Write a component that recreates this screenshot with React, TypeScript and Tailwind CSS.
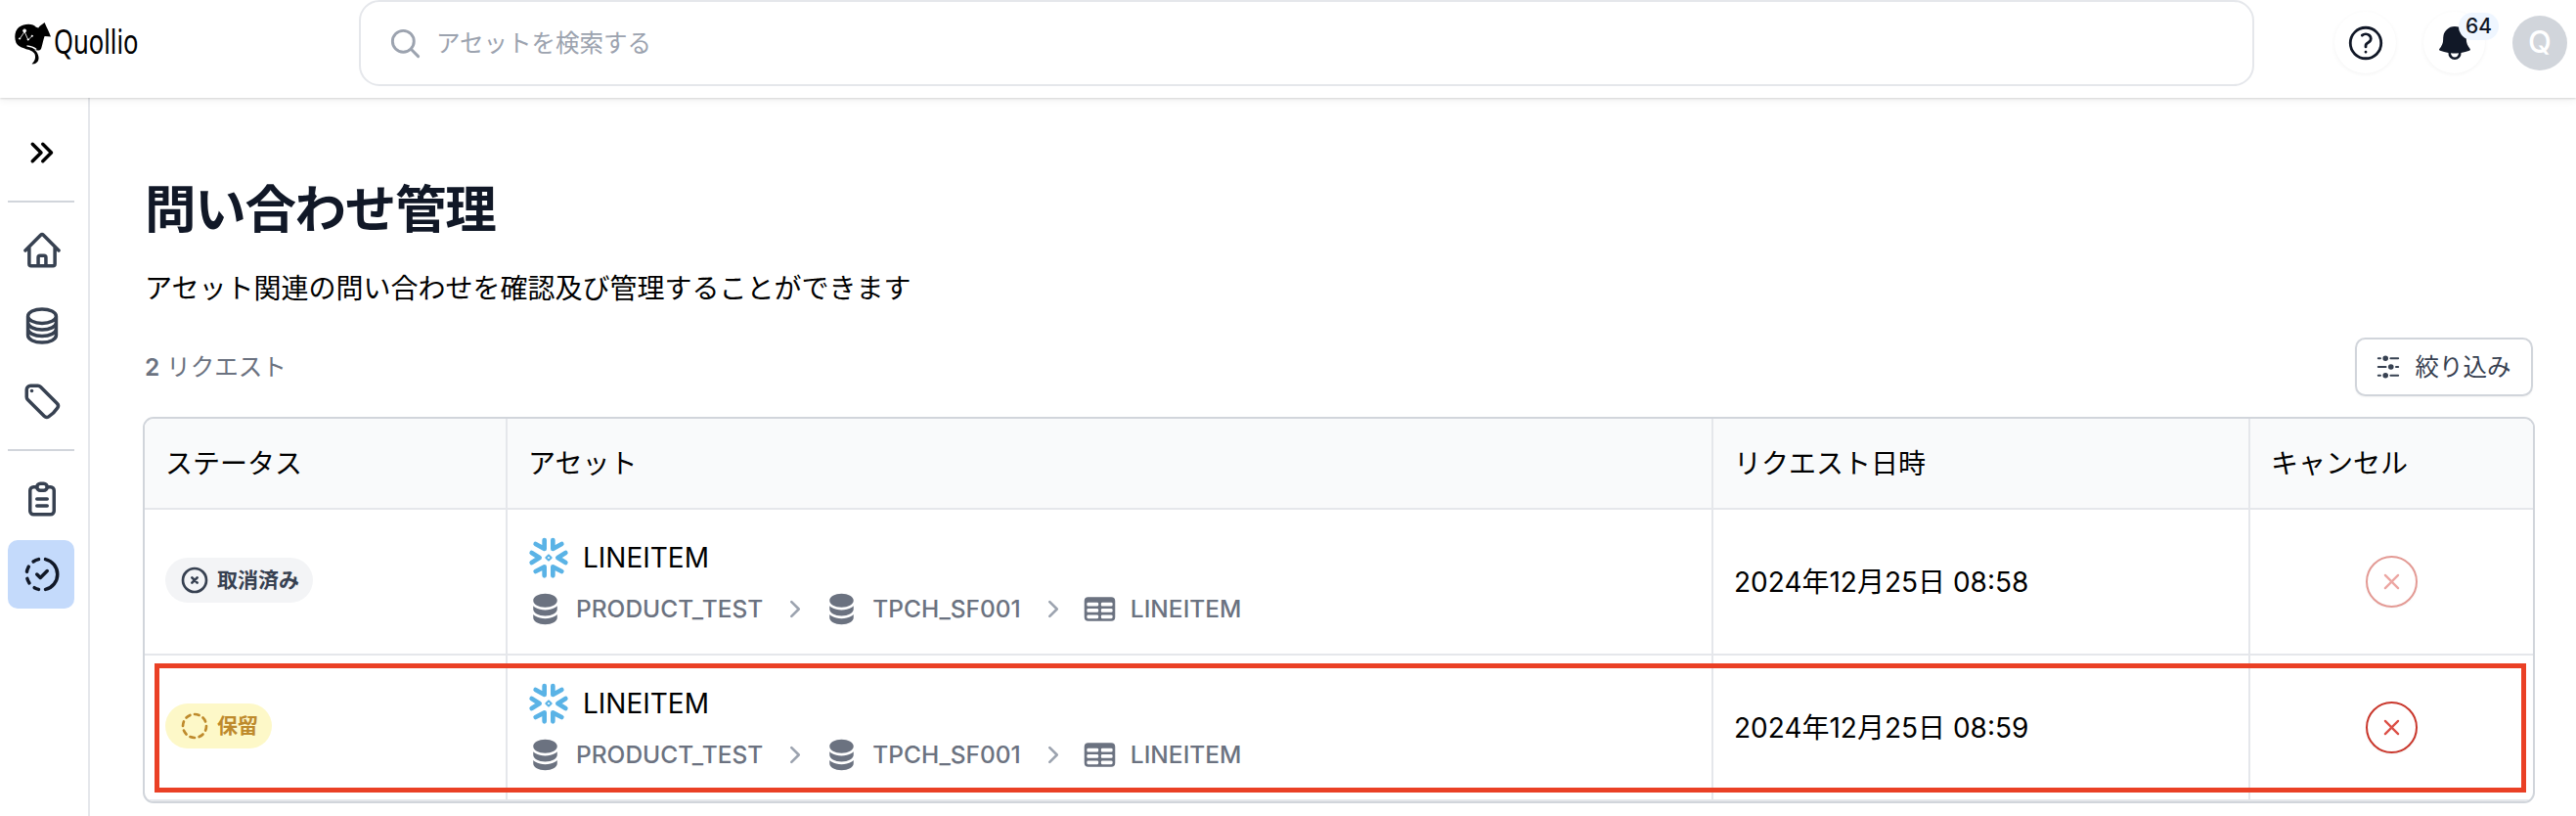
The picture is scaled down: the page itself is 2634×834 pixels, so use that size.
import {
  HiBell, HiMiniAdjustmentsHorizontal, HiMiniChevronRight, HiMiniCircleStack, HiMiniTableCells,
  HiMiniXMark, HiOutlineCircleStack, HiOutlineHome, HiOutlineMagnifyingGlass,
  HiOutlineQuestionMarkCircle, HiOutlineTag
} from 'react-icons/hi2';
import { TbChevronsRight, TbCircleDashed, TbCircleX, TbClipboardText, TbProgressCheck } from 'react-icons/tb';

type RequestStatus = 'cancelled' | 'pending';

interface AssetRequest {
  id: number;
  status: RequestStatus;
  asset: string;
  path: { name: string; type: 'stack' | 'table' }[];
  requestedAt: string;
}

const assetPath: AssetRequest['path'] = [
  { name: 'PRODUCT_TEST', type: 'stack' },
  { name: 'TPCH_SF001', type: 'stack' },
  { name: 'LINEITEM', type: 'table' },
];

const requests: AssetRequest[] = [
  { id: 1, status: 'cancelled', asset: 'LINEITEM', path: assetPath, requestedAt: '2024年12月25日 08:58' },
  { id: 2, status: 'pending', asset: 'LINEITEM', path: assetPath, requestedAt: '2024年12月25日 08:59' },
];

const columns = ['ステータス', 'アセット', 'リクエスト日時', 'キャンセル'];

function Logo() {
  return (
    <div className="flex w-[352px] shrink-0 items-start pl-[15px]">
      <svg viewBox="27 32 110 128" className="mt-[23px] h-[43px] w-[37px] shrink-0">
        <path
          d="M118 32 C110 38 103 42 99 48 L92 46 C84 34 56 34 40 46 C27 56 25 78 31 93 C36 104 47 108 60 112 C72 115 84 119 88 128 C92 140 88 150 79 158 C96 160 104 145 98 130 C96 123 91 118 85 114 C97 119 106 118 108 110 C112 98 114 84 118 74 L137 75 C132 62 124 46 118 32 Z"
          fill="#000"
        />
        <path d="M64 103 C76 104 86 108 93 114" stroke="#fff" strokeWidth="4" fill="none" />
        <g stroke="#fff" strokeWidth="2.5" fill="#fff">
          <path d="M42 82 L57 60 L68 85 L81 72" fill="none" />
          <circle cx="57" cy="57" r="4.5" />
          <circle cx="42" cy="81" r="2" />
          <circle cx="68" cy="84" r="2" />
          <circle cx="80" cy="73" r="2" />
        </g>
      </svg>
      <span className="mt-[18px] ml-[3px] origin-left scale-x-[0.73] font-['Noto_Sans',sans-serif] text-[35px] leading-[48px] text-black">
        Quollio
      </span>
    </div>
  );
}

function SnowflakeIcon({ className }: { className?: string }) {
  return (
    <svg
      viewBox="0 0 126 126"
      className={className}
      fill="none"
      stroke="currentColor"
      strokeWidth="14"
      strokeLinecap="round"
      strokeLinejoin="round"
    >
      <path d="M50 9 V36 L23 21" />
      <path d="M76 9 V36 L103 21" />
      <path d="M50 118 V91 L23 105" />
      <path d="M76 118 V91 L103 105" />
      <path d="M11 48 L35 63 L11 78" />
      <path d="M115 48 L91 63 L115 78" />
      <path d="M63 55 L71 63 L63 71 L55 63 Z" strokeWidth="6" />
    </svg>
  );
}

function Header() {
  return (
    <header className="relative flex h-[100px] shrink-0 items-start bg-white shadow-[0_1px_2px_rgba(0,0,0,0.13),0_2px_8px_rgba(0,0,0,0.07)]">
      <Logo />
      <div className="ml-[15px] flex h-[88px] w-[1938px] shrink-0 items-center gap-[14px] rounded-[21px] border-2 border-gray-200 bg-white pl-[28px]">
        <HiOutlineMagnifyingGlass className="h-[35px] w-[35px] text-[#9ca3af]" strokeWidth={2} />
        <span className="text-[24.5px] text-[#9ca3af]">アセットを検索する</span>
      </div>
      <div className="ml-auto flex items-center gap-[28px] pt-[12px] pr-[9px]">
        <button className="flex h-[63px] w-[63px] items-center justify-center rounded-full bg-white shadow-[0_1px_4px_rgba(0,0,0,0.05)]">
          <HiOutlineQuestionMarkCircle className="h-[42px] w-[42px] text-[#111827]" strokeWidth={1.6} />
        </button>
        <button className="relative flex h-[63px] w-[63px] items-center justify-center rounded-full bg-white shadow-[0_1px_4px_rgba(0,0,0,0.05)]">
          <HiBell className="h-[42px] w-[42px] text-[#111827]" />
          <span className="absolute top-[1px] left-[36px] flex h-[28px] w-[41px] items-center justify-center rounded-full bg-[#eff6ff] text-[21px] font-medium text-[#111827]">
            64
          </span>
        </button>
        <div className="flex h-[56px] w-[56px] items-center justify-center rounded-full bg-[#d1d5db] text-[31px] font-medium text-white">
          Q
        </div>
      </div>
    </header>
  );
}

function Sidebar() {
  return (
    <nav className="flex w-[92px] shrink-0 flex-col border-r-2 border-[#e5e7eb] pl-[8px] text-[#374151]">
      <button className="mt-[21px] flex h-[70px] w-[68px] items-center justify-center text-black">
        <TbChevronsRight className="h-[42px] w-[42px]" />
      </button>
      <div className="mt-[14px] h-[2px] w-[68px] bg-[#d1d5db]" />
      <div className="mt-[14px] flex w-[68px] flex-col gap-[7px]">
        {[HiOutlineHome, HiOutlineCircleStack, HiOutlineTag].map((Icon, i) => (
          <button key={i} className="flex h-[70px] items-center justify-center">
            <Icon className="ml-[2px] h-[42px] w-[42px]" strokeWidth={2} />
          </button>
        ))}
      </div>
      <div className="mt-[14px] h-[2px] w-[68px] bg-[#d1d5db]" />
      <div className="mt-[14px] flex w-[68px] flex-col gap-[7px]">
        <button className="flex h-[70px] items-center justify-center">
          <TbClipboardText className="ml-[2px] h-[42px] w-[42px]" />
        </button>
        <button className="flex h-[70px] items-center justify-center rounded-[10px] bg-[#c4dafb] text-[#111827]">
          <TbProgressCheck className="ml-[2px] h-[42px] w-[42px]" />
        </button>
      </div>
    </nav>
  );
}

function StatusBadge({ status }: { status: RequestStatus }) {
  if (status === 'pending') {
    return (
      <span className="mb-[3px] inline-flex h-[46px] items-center gap-[7px] rounded-full bg-[#fdf8c8] px-[14px] text-[21px] font-bold text-[#be8a2c]">
        <TbCircleDashed className="h-[32px] w-[32px]" />
        保留
      </span>
    );
  }
  return (
    <span className="mb-[3px] inline-flex h-[46px] items-center gap-[7px] rounded-full bg-[#f3f4f6] px-[14px] text-[21px] font-bold text-[#374151]">
      <TbCircleX className="h-[32px] w-[32px]" />
      取消済み
    </span>
  );
}

function Breadcrumb({ path }: { path: AssetRequest['path'] }) {
  return (
    <div className="flex h-[35px] items-center gap-[14px] text-[24.5px] font-medium text-[#6b7280]">
      {path.map((p, i) => (
        <div key={p.name} className="flex items-center gap-[14px]">
          {i > 0 && <HiMiniChevronRight className="h-[35px] w-[35px] text-[#9ca3af]" />}
          {p.type === 'table'
            ? <HiMiniTableCells className="h-[35px] w-[35px]" />
            : <HiMiniCircleStack className="h-[35px] w-[35px]" />}
          <span>{p.name}</span>
        </div>
      ))}
    </div>
  );
}

export default function App() {
  return (
    <div className="flex h-[834px] w-[2634px] flex-col overflow-hidden bg-white font-['Inter','Noto_Sans_CJK_JP',sans-serif]">
      <Header />
      <div className="flex flex-1">
        <Sidebar />
        <main className="flex flex-1 flex-col pr-[42px] pl-[54px]">
          <h1 className="mt-[82px] ml-[2px] text-[52.5px] leading-[64px] font-bold tracking-tight text-[#111827]">
            問い合わせ管理
          </h1>
          <p className="mt-[28px] ml-[2px] text-[28px] leading-[42px] text-black">
            アセット関連の問い合わせを確認及び管理することができます
          </p>
          <div className="mt-[29px] mr-[2px] ml-[2px] flex h-[60px] items-center justify-between">
            <span className="text-[24.5px] text-[#6b7280]">
              <span className="font-semibold">2</span> リクエスト
            </span>
            <button className="flex h-[60px] items-center gap-[14px] rounded-[10.5px] border-2 border-[#d1d5db] bg-white pr-[20.5px] pl-[17.5px] text-[24.5px] text-[#374151] shadow-xs">
              <HiMiniAdjustmentsHorizontal className="h-[28px] w-[28px]" />
              絞り込み
            </button>
          </div>

          <div className="relative mt-[21px] overflow-hidden rounded-[11px] border-2 border-[#d1d5db]">
            <div className="grid grid-cols-[371px_1233px_549px_289px] border-b-2 border-[#e5e7eb] bg-[#f9fafb]">
              {columns.map(col => (
                <div
                  key={col}
                  className="flex h-[91px] items-center border-r-2 border-[#e5e7eb] px-[21px] text-[28px] text-black last:border-r-0"
                >
                  {col}
                </div>
              ))}
            </div>
            {requests.map(r => (
              <div key={r.id} className="grid h-[149px] grid-cols-[371px_1233px_549px_289px] border-b-2 border-[#e5e7eb]">
                <div className="flex items-center border-r-2 border-[#e5e7eb] px-[21px]">
                  <StatusBadge status={r.status} />
                </div>
                <div className="flex flex-col justify-center gap-[14px] border-r-2 border-[#e5e7eb] px-[21px]">
                  <div className="flex h-[42px] items-center gap-[14px] text-[28px] text-black">
                    <SnowflakeIcon className="h-[42px] w-[42px] text-[#5ab3e6]" />
                    {r.asset}
                  </div>
                  <Breadcrumb path={r.path} />
                </div>
                <div className="flex items-center border-r-2 border-[#e5e7eb] px-[21px] text-[28px] text-black">
                  {r.requestedAt}
                </div>
                <div className="flex items-center justify-center">
                  <button
                    disabled={r.status === 'cancelled'}
                    className="flex h-[53px] w-[53px] items-center justify-center rounded-full border-2 border-[#c9372c] text-[#dc5047] shadow-xs disabled:opacity-50"
                  >
                    <HiMiniXMark className="h-[31px] w-[31px]" />
                  </button>
                </div>
              </div>
            ))}
            {/* highlight around the pending request */}
            <div className="pointer-events-none absolute top-[250px] left-[10px] h-[132px] w-[2425px] border-[5px] border-[#ea4025]" />
          </div>
        </main>
      </div>
    </div>
  );
}
